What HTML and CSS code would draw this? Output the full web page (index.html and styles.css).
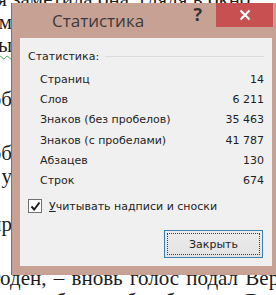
FILE: index.html
```html
<!DOCTYPE html>
<html lang="ru">

<head>
    <meta charset="UTF-8">
    <title>Статистика</title>
    <link rel="stylesheet" href="styles.css">
</head>

<body>
    <div class="page">
        <!-- документ под окном -->
        <div class="doc">
            <div class="line first"><span>ая</span> заметила она, глядя в окно</div>
            <div class="line tail"><span>сам</span></div>
            <div class="line tail"><span class="spell">вы</span></div>
            <div class="line tail gap"><span>об</span></div>
            <div class="line tail gap"><span>об</span></div>
            <div class="line tail"><span>у</span></div>
            <div class="line tail gap2"><span>пр</span></div>
            <div class="line full gap">годен, – вновь голос подал Верховный</div>
            <div class="line full">что-то было  в  безобразном  Верх</div>
        </div>

        <!-- окно статистики -->
        <div class="dialog">
            <div class="titlebar">
                <span class="title">Статистика</span>
                <span class="help">?</span>
                <span class="close">
                    <svg width="12" height="12" viewBox="0 0 12 12">
                        <path d="M1.5 1.5 L10.5 10.5 M10.5 1.5 L1.5 10.5" stroke="#fff" stroke-width="2.2" fill="none"/>
                    </svg>
                </span>
            </div>
            <div class="client">
                <div class="group">
                    <span>Статистика:</span>
                    <i class="rule"></i>
                </div>
                <ul class="stats">
                    <li><span>Страниц</span><span>14</span></li>
                    <li><span>Слов</span><span>6 211</span></li>
                    <li><span>Знаков (без пробелов)</span><span>35 463</span></li>
                    <li><span>Знаков (с пробелами)</span><span>41 787</span></li>
                    <li><span>Абзацев</span><span>130</span></li>
                    <li><span>Строк</span><span>674</span></li>
                </ul>
                <label class="check">
                    <span class="box">
                        <svg width="11" height="11" viewBox="0 0 11 11">
                            <path d="M1.5 5.5 L4.2 8.5 L9.5 1.5" stroke="#1e1e1e" stroke-width="2" fill="none"/>
                        </svg>
                    </span>
                    <span><u>У</u>читывать надписи и сноски</span>
                </label>
                <div class="buttons">
                    <button class="btn"><span>Закрыть</span></button>
                </div>
            </div>
        </div>
    </div>
</body>

</html>
```

FILE: styles.css
```css
* {
    padding: 0;
    margin: 0;
    box-sizing: border-box;
}

html,
body {
    overflow: hidden;
    background: #fff;
}

.page {
    width: 276px;
    height: 295px;
    overflow: hidden;
    position: relative;
}

/* документ */
.doc {
    font-family: "Liberation Serif", serif;
    font-size: 21px;
    line-height: 23px;
    color: #1c1c1c;
    margin-top: -12px;
}

.doc .line {
    white-space: nowrap;
}

.doc .first {
    margin-left: -12px;
}

.doc .tail {
    width: 12px;
    display: flex;
    justify-content: flex-end;
}

.doc .gap {
    margin-top: 31px;
}

.doc .gap2 {
    margin-top: 25px;
}

.doc .full {
    margin-left: -8px;
    word-spacing: 2px;
}

.doc .spell {
    text-decoration: underline wavy #3fa34d;
    text-decoration-thickness: 1px;
    text-underline-offset: 3px;
}

/* окно */
.dialog {
    position: absolute;
    z-index: 1;
    left: 11px;
    top: 3px;
    width: 269px;
    height: 272px;
    background: #c8a195;
    border-left: 1px solid #8a6f67;
    padding: 0 8px 9px 8px;
    display: flex;
    flex-direction: column;
}

.titlebar {
    height: 35px;
    display: flex;
    align-items: flex-start;
}

.title {
    font-family: "Open Sans", sans-serif;
    font-size: 17px;
    color: #3a3a3a;
    margin-left: 32px;
    margin-top: 6px;
}

.help {
    font-family: "Open Sans", sans-serif;
    font-weight: bold;
    font-size: 18px;
    color: #333;
    margin-left: auto;
    margin-top: -1px;
    margin-right: 14px;
}

.close {
    width: 57px;
    height: 24px;
    background: #c75050;
    margin-right: -1px;
    display: flex;
    align-items: center;
    justify-content: center;
}

.client {
    flex: 1;
    background: #f0f0f0;
    padding: 10px 8px 7px 8px;
    font-family: "DejaVu Sans", sans-serif;
    font-size: 11px;
    color: #1e1e1e;
    display: flex;
    flex-direction: column;
}

.group {
    display: flex;
    align-items: center;
    height: 16px;
}

.group .rule {
    flex: 1;
    height: 1px;
    background: #dcdcdc;
    margin-left: 6px;
}

.stats {
    list-style-type: none;
    margin-top: 6px;
}

.stats li {
    display: flex;
    justify-content: space-between;
    height: 20.2px;
    line-height: 20px;
    padding-left: 12px;
}

.check {
    display: flex;
    align-items: center;
    height: 16px;
    margin-top: 7px;
}

.check .box {
    width: 14px;
    height: 14px;
    border: 1px solid #707070;
    background: #fff;
    display: flex;
    align-items: center;
    justify-content: center;
    margin-right: 7px;
}

.buttons {
    display: flex;
    justify-content: flex-end;
    margin-top: 16px;
    padding-right: 1px;
}

.btn {
    width: 99px;
    height: 28px;
    border: 1px solid #3c7fb1;
    background: linear-gradient(#ececec, #e3e3e3);
    padding: 2px;
    font-family: "DejaVu Sans", sans-serif;
    font-size: 11px;
    color: #1e1e1e;
}

.btn span {
    display: flex;
    align-items: center;
    justify-content: center;
    height: 100%;
    border: 1px dotted #404040;
}
```
